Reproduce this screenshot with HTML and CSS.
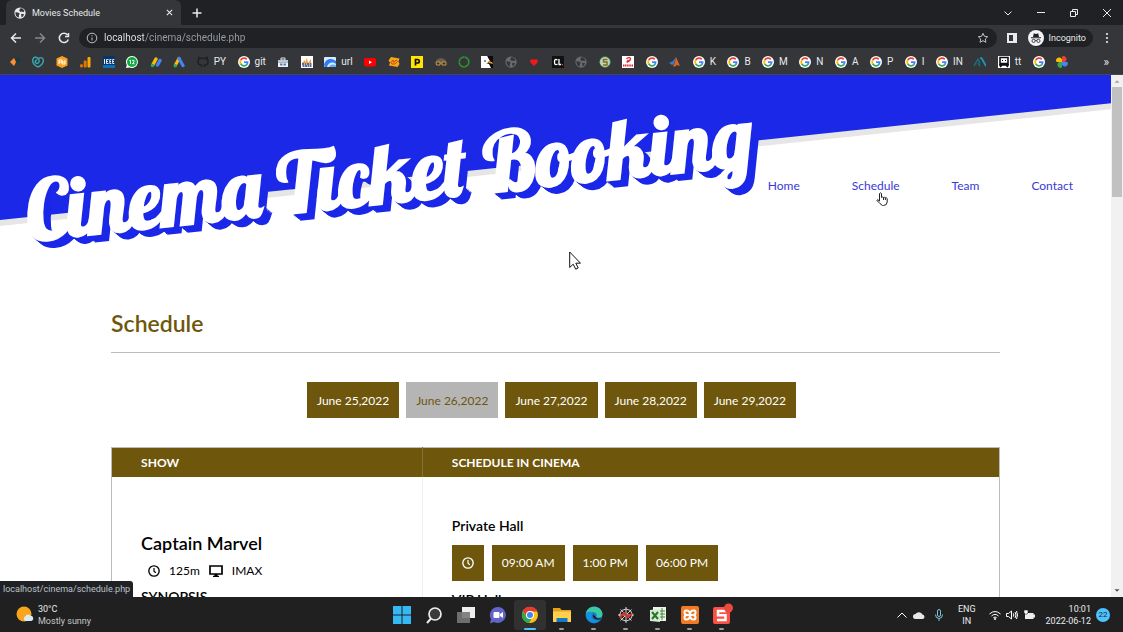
FILE: index.html
```html
<!DOCTYPE html>
<html lang="en">
<head>
    <meta charset="UTF-8">
    <meta name="viewport" content="width=device-width, initial-scale=1.0">
    <title>Movies Schedule</title>
    <link rel="stylesheet" href="styles.css">
</head>
<body>
    <svg class="defs" aria-hidden="true">
        <symbol id="google" viewBox="0 0 48 48">
            <circle cx="24" cy="24" r="24" fill="#fff"/>
            <g fill="none" stroke-width="7">
                <path d="M11 16.500A15 15 0 0 1 35 13.500" stroke="#ea4335"/>
                <path d="M11 32A15 15 0 0 1 11 16" stroke="#fbbc05"/>
                <path d="M35 34.500A15 15 0 0 1 11 31.500" stroke="#34a853"/>
                <path d="M24 24H38.500A15 15 0 0 1 34 35" stroke="#4285f4"/>
            </g>
        </symbol>
        <symbol id="globe" viewBox="0 0 16 16">
            <circle cx="8" cy="8" r="7.500" fill="currentColor"/>
            <path d="M2 6.500c2 .5 3 1 4.500 1l1 1.500-1 2v3C3.500 13.500 1.500 11 2 6.500zM8 2l3-.3 3 3.300-1.500 2-2-1-2 .5L7 4.500zM9.500 9l4 .5-1.500 3-2 1z" class="land"/>
        </symbol>
        <symbol id="clock" viewBox="0 0 16 16">
            <circle cx="8" cy="8" r="6.900" fill="none" stroke="currentColor" stroke-width="1.800"/>
            <path d="M8 4v4.300l2.500 2" fill="none" stroke="currentColor" stroke-width="1.600"/>
        </symbol>
    </svg>

    <div class="tab-strip">
        <div class="tab">
            <svg class="icon tab-icon"><use href="#globe"/></svg>
            <span class="tab-title">Movies Schedule</span>
            <button class="tab-close" aria-label="Close tab"><svg viewBox="0 0 8 8"><path d="M1 1l6 6M7 1L1 7"/></svg></button>
        </div>
        <button class="new-tab" aria-label="New tab"><svg viewBox="0 0 10 10"><path d="M5 0.500v9M0.500 5h9"/></svg></button>
        <div class="window-controls">
            <button aria-label="Search tabs"><svg viewBox="0 0 10 10"><path d="M1.500 3.500L5 7l3.500-3.500"/></svg></button>
            <button aria-label="Minimize"><svg viewBox="0 0 10 10"><path d="M1 4.500h8"/></svg></button>
            <button aria-label="Restore"><svg viewBox="0 0 10 10"><path d="M1.500 3.500h5v5h-5zM3.500 3V1.500h5v5H7"/></svg></button>
            <button aria-label="Close"><svg viewBox="0 0 10 10"><path d="M1 1l8 8M9 1L1 9"/></svg></button>
        </div>
    </div>

    <div class="toolbar">
        <button class="tool" aria-label="Back"><svg viewBox="0 0 12 12"><path d="M11 6H1.500M6 1.500L1.500 6 6 10.500"/></svg></button>
        <button class="tool tool-off" aria-label="Forward"><svg viewBox="0 0 12 12"><path d="M1 6h9.500M6 1.500L10.500 6 6 10.500"/></svg></button>
        <button class="tool" aria-label="Reload"><svg viewBox="0 0 12 12"><path d="M10.300 7.500A4.600 4.600 0 1 1 9.500 3M10.500 1v3.500H7"/></svg></button>
        <div class="omnibox">
            <svg class="info" viewBox="0 0 12 12"><circle cx="6" cy="6" r="4.800"/><path d="M6 5.500v3M6 3.300v1"/></svg>
            <input class="address" type="text" aria-label="Address" value="localhost/cinema/schedule.php">
            <button class="star" aria-label="Bookmark"><svg viewBox="0 0 12 12"><path d="M6 1.300l1.400 3 3.300.4-2.400 2.300.6 3.300L6 8.700l-2.900 1.600.6-3.300L1.300 4.700l3.300-.4z"/></svg></button>
        </div>
        <button class="tool side-panel" aria-label="Side panel"><svg viewBox="0 0 12 12"><path d="M1 1h10v10H1zM3 3v6h4V3z" fill-rule="evenodd"/></svg></button>
        <button class="incognito">
            <svg viewBox="0 0 16 16"><circle cx="8" cy="8" r="8" fill="#f1f3f4"/><path d="M5 7l.8-3.700L8 4l2.200-.7L11 7zM3 7.300h10v.9H3z" fill="#202124"/><path d="M7.200 10.500q.8-.6 1.600 0" fill="none" stroke="#202124" stroke-width=".8"/><circle cx="5.600" cy="10.900" r="1.600" fill="none" stroke="#202124" stroke-width=".8"/><circle cx="10.400" cy="10.900" r="1.600" fill="none" stroke="#202124" stroke-width=".8"/></svg>
            Incognito
        </button>
        <button class="tool menu" aria-label="Menu"><svg viewBox="0 0 12 12"><circle cx="6" cy="2" r="1.100"/><circle cx="6" cy="6" r="1.100"/><circle cx="6" cy="10" r="1.100"/></svg></button>
    </div>

    <div class="bookmarks">
        <div class="bookmark-list">
            <a href="#" aria-label="Diamonds"><svg class="icon" viewBox="0 0 12 12"><path d="M1 6l4-4 2 4-2 4z" fill="#ff8f2b"/><path d="M8 1l4 3-4 4-1-3z" fill="#103c42"/></svg></a>
            <a href="#" aria-label="Hosting"><svg class="icon" viewBox="0 0 12 12"><g fill="none" stroke="#39a7ae" stroke-width="1.400"><path d="M6 11C2 9 0 6 1 3c1-3 5-2 6 1 .8 2-1 4-3 3-1.500-1-.5-3 1-3"/><path d="M6 11c4-2 6-5 5-8-1-2-4-2-5 1"/></g></svg></a>
            <a href="#" aria-label="Hexagon"><svg class="icon" viewBox="0 0 12 12"><path d="M6 0l5.500 2.500v7L6 12 .5 9.500v-7z" fill="#f9a11b"/><path d="M3 8V4h3v4h3V4M3 6h6" fill="none" stroke="#fff"/></svg></a>
            <a href="#" aria-label="Analytics"><svg class="icon" viewBox="0 0 12 12"><rect x="1" y="8" width="3" height="3.500" rx="1.500" fill="#e37400"/><rect x="4.700" y="4.500" width="3" height="7" rx="1" fill="#e37400"/><rect x="8.500" y="1" width="3" height="10.500" rx="1" fill="#f9ab00"/></svg></a>
            <a href="#" aria-label="IEEE"><svg class="icon" viewBox="0 0 12 12"><path d="M0 0h12v12H0z" fill="#06366f"/><path d="M0 9h12v3H0z" fill="#0a72b8"/><path d="M1.500 3v5M5.500 3.500h-2v4h2M3.500 5.500h1.500M8.300 3.500h-1.500v4h1.500M6.800 5.500H8M11.300 3.500H9.700v4h1.600M9.700 5.500H11" fill="none" stroke="#fff" stroke-width=".9"/></svg></a>
            <a href="#" aria-label="Messages"><svg class="icon" viewBox="0 0 12 12"><path d="M6 0a6 6 0 1 1-2.500 11.500L0 12l.8-3A6 6 0 0 1 6 0z" fill="#fff"/><circle cx="6" cy="6" r="5" fill="#11ad43"/><path d="M3.500 5l1-1v4M6.200 4.500H8V6L6.300 7.700h2.200" fill="none" stroke="#fff" stroke-width=".9"/></svg></a>
            <a href="#" aria-label="AdSense"><svg class="icon" viewBox="0 0 12 12"><g stroke-width="3.400" stroke-linecap="round"><path d="M6 3L3 8.500" stroke="#fbbc04"/><path d="M10 4.500L7.500 9" stroke="#4285f4"/></g><circle cx="2.500" cy="9.500" r="1.800" fill="#34a853"/></svg></a>
            <a href="#" aria-label="Ads"><svg class="icon" viewBox="0 0 12 12"><g stroke-width="3.200" stroke-linecap="round"><path d="M6 2.500L2.500 9" stroke="#fbbc04"/><path d="M6 2.500L10 9.500" stroke="#4285f4"/></g><circle cx="2.200" cy="9.700" r="1.700" fill="#34a853"/></svg></a>
            <a href="#"><svg class="icon" viewBox="0 0 12 12"><path d="M4.500 11V9.300C2 9 .8 7.500 1 5.500c0-1 .5-1.700.8-2V1.500l2 1q2.200-.6 4.400 0l2-1v2c.3.300.8 1 .8 2 .2 2-1 3.500-3.500 3.800V11" fill="none" stroke="#202124" stroke-width="1.600"/></svg>PY</a>
            <a href="#"><svg class="icon"><use href="#google"/></svg>git</a>
            <a href="#" aria-label="Store"><svg class="icon" viewBox="0 0 12 12"><path d="M4 2h4v2H4z" fill="none" stroke="#dfe3e8"/><path d="M1 4h10v2.500H1z" fill="#b8c8e0"/><path d="M1 6.500h10V11H1z" fill="#eef2f7"/><path d="M3 7.500h2.500v2H3zM6.500 7.500H9v2H6.500z" fill="#5b7fa8"/></svg></a>
            <a href="#" aria-label="Chart"><svg class="icon" viewBox="0 0 12 12"><path d="M0 0h12v12H0z" fill="#fff"/><path d="M1 7l3-3v3l2-5 1 5 3-4v4z" fill="#f59a21"/><path d="M1 8h10M1.500 10h9" stroke="#263c7a" stroke-width="1.300" stroke-dasharray="2 .5"/></svg></a>
            <a href="#"><svg class="icon" viewBox="0 0 12 12"><rect y="1" width="12" height="10" rx="1" fill="#d9e9ff"/><path d="M0 9C1 3 7 1 12 5v3C8 5 4 7 3 11H1z" fill="#2f7ef2"/><path d="M5 11c1-3 4-3 7-2v2z" fill="#65adff"/></svg>url</a>
            <a href="#" aria-label="YouTube"><svg class="icon" viewBox="0 0 12 12"><rect y="2" width="12" height="8.500" rx="2" fill="#f00"/><path d="M5 4.500v3.500l3-1.700z" fill="#fff"/></svg></a>
            <a href="#" aria-label="Ticket"><svg class="icon" viewBox="0 0 12 12"><path d="M3 1l8.500 1.500-1 3 1 2.500-2 3L1 9.500l1-3-1.500-2z" fill="#f8a51b"/><path d="M3 6.500l2-2.500 1 2.500L8 4l1.500 1.500L7 8H4z" fill="none" stroke="#b8480b" stroke-width=".9"/></svg></a>
            <a href="#" aria-label="P"><svg class="icon" viewBox="0 0 12 12"><path d="M0 0h12v12H0z" fill="#ffe500"/><path d="M4.500 9.500v-6h2a1.500 1.500 0 0 1 0 3.500h-2" fill="none" stroke="#111" stroke-width="1.700"/></svg></a>
            <a href="#" aria-label="Glasses"><svg class="icon" viewBox="0 0 12 12"><path d="M1 6c0-5 10-5 10 0z" fill="#6b6050"/><path d="M1 6h4v3H1.500zM7 6h4v3H7zM5 7h2" fill="#33302c" stroke="#c99845"/></svg></a>
            <a href="#" aria-label="Ring"><svg class="icon" viewBox="0 0 12 12"><circle cx="6" cy="6" r="4.800" fill="none" stroke="#27992f" stroke-width="1.700" stroke-dasharray="7 .5"/></svg></a>
            <a href="#" aria-label="Eagle"><svg class="icon" viewBox="0 0 12 12"><path d="M0 0h12v12H0z" fill="#fff"/><path d="M6 0h6v12h-2L8 8 5 7l3-1z" fill="#0b0b0b"/><path d="M1 0h5l3 5-3 2H1z" fill="#fff"/><path d="M7 5l4 1 1 2-4-1z" fill="#f39c1f"/><circle cx="4" cy="5" r=".8"/></svg></a>
            <a href="#" class="grey-globe" aria-label="Site"><svg class="icon"><use href="#globe"/></svg></a>
            <a href="#" aria-label="Heart"><svg class="icon" viewBox="0 0 12 12"><path d="M6 10L2.500 6.500C1 4 4 2 6 4c2-2 5 0 3.500 2.500z" fill="#f01818"/></svg></a>
            <a href="#" aria-label="CL"><svg class="icon" viewBox="0 0 12 12"><path d="M0 0h12v12H0z" fill="#111"/><path d="M5.500 4C3 2.500 2.500 4 2.500 6s.5 3.500 3 2M7 3v5.500h2" fill="none" stroke="#fff" stroke-width="1.300"/><path d="M9.800 8h1.200v1.200H9.800z" fill="#e43"/></svg></a>
            <a href="#" class="grey-globe" aria-label="Site"><svg class="icon"><use href="#globe"/></svg></a>
            <a href="#" aria-label="S coin"><svg class="icon" viewBox="0 0 12 12"><circle cx="6" cy="6" r="5.300" fill="#bdd7b5" stroke="#3d8b72" stroke-dasharray="2 1"/><path d="M8.500 3.500H4.500v2.500h3.500v3H4" fill="none" stroke="#8a6a20" stroke-width="1.500"/></svg></a>
            <a href="#" aria-label="Airtel"><svg class="icon" viewBox="0 0 12 12"><path d="M0 0h12v12H0z" fill="#fff"/><path d="M4.500 2.800c1.500-2 4.500-1.500 3.800.7-.4 1.500-3 3-3.300 2.500-.4-.7 1-1.300 1.500-2" fill="none" stroke="#e3262e" stroke-width="1.300"/><path d="M1 9.500h10" stroke="#e3262e" stroke-width="2" stroke-dasharray="1.300 .5"/></svg></a>
            <a href="#" aria-label="Google"><svg class="icon"><use href="#google"/></svg></a>
            <a href="#" aria-label="Matlab"><svg class="icon" viewBox="0 0 12 12"><path d="M0 7l4-2 3-4-2 7-2 1z" fill="#2f80c4"/><path d="M7 1l4 9-3-1-3 2-1-2c2 0 2-5 3-8z" fill="#e0602b"/></svg></a>
            <a href="#"><svg class="icon"><use href="#google"/></svg>K</a>
            <a href="#"><svg class="icon"><use href="#google"/></svg>B</a>
            <a href="#"><svg class="icon"><use href="#google"/></svg>M</a>
            <a href="#"><svg class="icon"><use href="#google"/></svg>N</a>
            <a href="#"><svg class="icon"><use href="#google"/></svg>A</a>
            <a href="#"><svg class="icon"><use href="#google"/></svg>P</a>
            <a href="#"><svg class="icon"><use href="#google"/></svg>I</a>
            <a href="#"><svg class="icon"><use href="#google"/></svg>IN</a>
            <a href="#" aria-label="Peaks"><svg class="icon" viewBox="0 0 12 12"><path d="M0 10l4-7 2 4M6 10l-2-3" fill="none" stroke="#1b6f80" stroke-width="1.500"/><path d="M6 2h1.500l4.500 8" fill="none" stroke="#17a0bd" stroke-width="1.700"/></svg></a>
            <a href="#"><svg class="icon" viewBox="0 0 12 12"><path d="M0 0h12v12H0z" fill="#fff"/><path d="M2 1.500h8v6H2zM1 9h10M2 11l2-2M10 11L8 9" fill="none" stroke="#111" stroke-width="1.600"/><path d="M4 4h1v1H4zM7 4h1v1H7z"/></svg>tt</a>
            <a href="#" aria-label="Google"><svg class="icon"><use href="#google"/></svg></a>
            <a href="#" aria-label="Photos"><svg class="icon" viewBox="0 0 12 12"><path d="M6 .5V6h2.800A2.800 2.800 0 0 0 6 .5z" fill="#ea4335"/><path d="M11.500 6H6v2.800A2.800 2.800 0 0 0 11.500 6z" fill="#4285f4"/><path d="M6 11.500V6H3.200A2.800 2.800 0 0 0 6 11.500z" fill="#34a853"/><path d="M.5 6H6V3.200A2.800 2.800 0 0 0 .5 6z" fill="#fbbc04"/></svg></a>
        </div>
        <button class="more" aria-label="More bookmarks">»</button>
    </div>

    <div class="viewport">
        <div class="page">
            <header class="header">
                <h1 class="logo">Cinema Ticket Booking</h1>
                <nav class="nav">
                    <a href="#">Home</a>
                    <a href="#">Schedule</a>
                    <a href="#">Team</a>
                    <a href="#">Contact</a>
                </nav>
            </header>

            <main class="section">
                <h2 class="section-title">Schedule</h2>
                <div class="dates">
                    <button class="btn">June 25,2022</button>
                    <button class="btn btn-active">June 26,2022</button>
                    <button class="btn">June 27,2022</button>
                    <button class="btn">June 28,2022</button>
                    <button class="btn">June 29,2022</button>
                </div>
                <table class="schedule">
                    <thead>
                        <tr>
                            <th class="col-show">SHOW</th>
                            <th>SCHEDULE IN CINEMA</th>
                        </tr>
                    </thead>
                    <tbody>
                        <tr>
                            <td class="movie">
                                <h3 class="movie-title">Captain Marvel</h3>
                                <div class="movie-info">
                                    <svg class="icon"><use href="#clock"/></svg>
                                    <span>125m</span>
                                    <svg class="screen" viewBox="0 0 14 12"><path d="M1 1h12v8H1z" fill="none" stroke="currentColor" stroke-width="1.700"/><path d="M5.500 9h3v1.800H10V12H4v-1.200h1.500z"/></svg>
                                    <span>IMAX</span>
                                </div>
                                <h4 class="synopsis">SYNOPSIS</h4>
                            </td>
                            <td class="halls">
                                <h4 class="hall-name">Private Hall</h4>
                                <div class="times">
                                    <button class="btn" aria-label="Times"><svg class="icon"><use href="#clock"/></svg></button>
                                    <button class="btn">09:00 AM</button>
                                    <button class="btn">1:00 PM</button>
                                    <button class="btn">06:00 PM</button>
                                </div>
                                <h4 class="hall-name">VIP Hall</h4>
                            </td>
                        </tr>
                    </tbody>
                </table>
            </main>
        </div>
        <div class="scrollbar">
            <svg viewBox="0 0 12 12"><path d="M3 8l3-3 3 3z" fill="#a3a3a3"/></svg>
            <div class="thumb"></div>
            <svg class="down" viewBox="0 0 12 12"><path d="M3 4l3 3 3-3z" fill="#505050"/></svg>
        </div>
        <div class="status">localhost/cinema/schedule.php</div>
        <svg class="pointer arrow" viewBox="0 0 12 19"><path d="M.7 1v15.500l3.500-3.300 2.500 5 2.500-1.200-2.400-4.800h4.700z" fill="#fff" stroke="#111"/></svg>
        <svg class="pointer hand" viewBox="0 0 12 14"><path d="M3.500 9V1.500q1-1.300 2 0v4q1-1 2 0 1-.7 1.900.3 1.100-.4 1.800.7V10q-.2 3.500-3.700 3.500H6.500Q4 12 .8 8.300q.5-1.500 2.700.7zM7.500 5.500V8M9.400 5.800V8" fill="#fff" stroke="#222"/></svg>
    </div>

    <footer class="taskbar">
        <div class="weather">
            <svg viewBox="0 0 18 18"><circle cx="8" cy="8" r="7.500" fill="#fba51a"/><path d="M9 15a3 3 0 0 1 .5-5 3 3 0 0 1 5-.3 2.700 2.700 0 0 1 .8 5.300z" fill="#dceaf8"/></svg>
            <div>30°C<br><span class="muted">Mostly sunny</span></div>
        </div>
        <div class="apps">
            <button aria-label="Start"><svg viewBox="0 0 18 18"><path d="M0 0h8.500v8.500H0zM9.500 0H18v8.500H9.500zM0 9.500h8.500V18H0zM9.500 9.500H18V18H9.500z" fill="#36b8f5"/></svg></button>
            <button aria-label="Search"><svg viewBox="0 0 18 18"><circle cx="10" cy="8" r="6" fill="#3b3b3b" stroke="#ededed" stroke-width="1.700"/><path d="M6 12.500L2 17" stroke="#ededed" stroke-width="2"/></svg></button>
            <button aria-label="Task view"><svg viewBox="0 0 18 18"><path d="M5 1h13v11H5z" fill="#eee"/><path d="M0 6h13v11H0z" fill="#777" opacity=".9"/></svg></button>
            <button aria-label="Chat"><svg viewBox="0 0 18 18"><path d="M9 1a8 8 0 1 1-4 15l-4 1.500L2 13A8 8 0 0 1 9 1z" fill="#6264c7"/><rect x="4.500" y="6" width="6" height="6" rx="1" fill="#fff"/><path d="M11 8l3-2v6l-3-2z" fill="#fff"/></svg></button>
            <button class="running current" aria-label="Chrome"><svg viewBox="0 0 18 18"><circle cx="9" cy="9" r="8" fill="#fbc116"/><path d="M2 5a8 8 0 0 1 14.300 0.500H9A3.700 3.700 0 0 0 5.800 11z" fill="#e33b2e"/><path d="M2 5l3.800 6.200A3.700 3.700 0 0 0 11 12l-3 5A8 8 0 0 1 2 5z" fill="#2da94f"/><circle cx="9" cy="9" r="4" fill="#fff"/><circle cx="9" cy="9" r="3" fill="#4285f4"/></svg></button>
            <button class="running" aria-label="Files"><svg viewBox="0 0 18 18"><path d="M0 2h7l1.500 2H18v4H0z" fill="#e5a11a"/><path d="M0 5.500h18V16H0z" fill="#ffd04b"/><path d="M3.500 16v-4h11v4z" fill="#1878c8"/></svg></button>
            <button class="running" aria-label="Edge"><svg viewBox="0 0 18 18"><circle cx="9" cy="9" r="8.500" fill="#1679c9"/><path d="M1 7C3-2 17-1 17.500 8c0 4-5 4.500-6.500 3 2-2 0-5-4-5-3 0-5 1-6 1z" fill="#3bc9a4"/><path d="M1 7c6-3 8 0 6 2-2 3 2 7 8 5-5 5-14 3-14-7z" fill="#1592df"/><path d="M8 8.500c-1 3 2 5.500 7 5l1.500-1.700C14 13 11 12.500 11 11z" fill="#202021"/></svg></button>
            <button class="running" aria-label="Spyder"><svg viewBox="0 0 18 18"><g fill="none" stroke="#e5e5e5" stroke-width=".9"><path d="M9 1v16M1 9h16M3.500 3.500l11 11M14.500 3.500l-11 11"/><path d="M9 3l4.500 1.500L15.500 9l-2 4.500L9 15l-4.500-1.500L2.500 9l2-4.500z"/></g><path d="M3 12l4-5 4 4 4-3" fill="none" stroke="#e12a20" stroke-width="2"/></svg></button>
            <button class="running" aria-label="Excel"><svg viewBox="0 0 18 18"><path d="M4 1h13v14H4z" fill="#eaf4e5"/><path d="M10 5h6M10 8h6M10 11h6M13 2v12" stroke="#438742"/><path d="M1 4l10-1v13L1 15z" fill="#d8ebd2"/><path d="M3 6l6 7M9 6l-6 7" stroke="#26762b" stroke-width="2"/></svg></button>
            <button class="running" aria-label="XAMPP"><svg viewBox="0 0 18 18"><rect width="18" height="18" rx="2" fill="#f37a25"/><path d="M6 4.500H5q-1.500 0-1.500 2T5.500 9h7q2 0 2-2.500T13 4.500h-1Q9 5 9 9t-3 4.500H5q-1.500 0-1.500-2T5.500 9M12.500 9q2 .5 2 2.500t-1.500 2h-1Q9 13 9 9T6 4.500" fill="none" stroke="#fff" stroke-width="2"/></svg></button>
            <button class="running" aria-label="Recorder"><svg viewBox="0 0 18 18"><rect y="1" width="17" height="17" rx="2" fill="#fc5043"/><path d="M13 5H5v4.300h7.500V14H4" fill="none" stroke="#fff" stroke-width="2.500"/><circle cx="15.500" cy="2" r="4.500" fill="#e94b3c"/></svg></button>
        </div>
        <div class="tray">
            <svg class="icon" viewBox="0 0 12 12"><path d="M1.500 8.500L6 4l4.500 4.500" fill="none" stroke="#fff"/></svg>
            <svg class="icon" viewBox="0 0 12 12"><path d="M2.500 10a2.500 2.500 0 0 1 0-5 4 4 0 0 1 7 .5 2.300 2.300 0 0 1 .3 4.500z" fill="#e8e8e8"/></svg>
            <svg class="icon mic" viewBox="0 0 12 12"><g fill="none" stroke="#79c4d4"><rect x="4.500" y=".5" width="3" height="7" rx="1.500"/><path d="M2.500 5.500q0 4 3.500 4t3.500-4M6 9.500V12"/></g></svg>
            <div class="lang">ENG<br>IN</div>
            <svg class="icon" viewBox="0 0 12 12"><g fill="none" stroke="#fff"><path d="M.5 5q5.500-5 11 0M2.500 7q3.500-3.300 7 0M4.300 8.800q1.700-1.600 3.400 0"/></g><circle cx="6" cy="10" r="1" fill="#fff"/></svg>
            <svg class="icon" viewBox="0 0 12 12"><path d="M.5 4.500h2l3-2.500v8L2.500 7.500h-2zM7.300 4.300q1 1.700 0 3.400M9 3q2 3 0 6M10.500 2q2 4 0 8" fill="none" stroke="#fff"/></svg>
            <svg class="icon" viewBox="0 0 12 12"><path d="M2 4h8.500v1.500H12v3h-1.500V10H2z" fill="#eee"/><path d="M1 1h4v3L3 5.500 1 4z" fill="#fff" stroke="#202021" stroke-width=".6"/></svg>
            <div class="date-time">10:01<br>2022-06-12</div>
            <span class="badge">22</span>
        </div>
    </footer>
</body>
</html>
```

FILE: styles.css
```css
* {
    box-sizing: border-box;
}
body {
    margin: 0;
    height: 100vh;
    display: flex;
    flex-direction: column;
    overflow: hidden;
    background: #fff;
    font-family: Lato, sans-serif;
    font-size: 12px;
    color: #000;
}
button {
    border: none;
    background: none;
    padding: 0;
    font: inherit;
    color: inherit;
    cursor: pointer;
}
a {
    text-decoration: none;
    color: inherit;
}
h1, h2, h3, h4 {
    margin: 0;
}
svg {
    display: block;
    flex: none;
}
.defs {
    position: absolute;
    width: 0;
    height: 0;
}
.icon {
    width: 12px;
    height: 12px;
}
.land {
    fill: #35363a;
}

/* browser window */
.tab-strip, .toolbar, .bookmarks, .status, .taskbar {
    font-family: Roboto, "Open Sans", sans-serif;
    color: #e8eaed;
}
.tab-strip {
    flex: none;
    display: flex;
    align-items: center;
    height: 25px;
    padding-left: 6px;
    background: #202124;
}
.tab {
    display: flex;
    align-items: center;
    gap: 6px;
    width: 175px;
    height: 25px;
    padding: 0 8px;
    border-radius: 6px 6px 0 0;
    background: #35363a;
    font-size: 9px;
}
.tab-title {
    flex: 1;
}
.tab-close svg {
    width: 7px;
    height: 7px;
}
.new-tab {
    margin-left: 11px;
}
.new-tab svg {
    width: 10px;
    height: 10px;
}
.tab-strip path {
    fill: none;
    stroke: #e8eaed;
    stroke-width: 1.2;
}
.new-tab path {
    stroke-width: 1.5;
}
.window-controls {
    display: flex;
    margin-left: auto;
}
.window-controls button {
    display: grid;
    place-items: center;
    width: 33px;
    height: 22px;
}
.window-controls svg {
    width: 10px;
    height: 10px;
}
.window-controls path {
    stroke-width: 1;
}
.toolbar {
    flex: none;
    display: flex;
    align-items: center;
    height: 26px;
    padding: 0 4px;
    background: #35363a;
}
.tool {
    display: grid;
    place-items: center;
    width: 24px;
}
.tool svg {
    width: 12px;
    height: 12px;
    fill: none;
    stroke: #e8eaed;
    stroke-width: 1.5;
}
.tool-off {
    opacity: 0.45;
}
.side-panel {
    margin-left: 3px;
}
.side-panel svg, .menu svg {
    fill: #e8eaed;
    stroke: none;
}
.omnibox {
    flex: 1;
    display: flex;
    align-items: center;
    gap: 6px;
    height: 20px;
    margin-left: 3px;
    padding: 0 8px 0 7px;
    border-radius: 10px;
    background: #202124;
}
.info, .star svg {
    width: 12px;
    height: 12px;
    fill: none;
    stroke: #bdc1c6;
}
.address {
    flex: 1;
    padding: 0;
    border: none;
    font: 10px/16px Roboto, "Open Sans", sans-serif;
    color: transparent;
    background: linear-gradient(to right, #e8eaed 40px, #9aa0a6 40px);
    -webkit-background-clip: text;
    background-clip: text;
}
.incognito {
    display: flex;
    align-items: center;
    gap: 5px;
    height: 18px;
    margin-left: 4px;
    padding-right: 7px;
    border-radius: 9px;
    background: #202124;
    font-size: 9px;
}
.incognito svg {
    width: 16px;
    height: 16px;
}
.menu {
    margin-left: 2px;
}
.bookmarks {
    flex: none;
    display: flex;
    align-items: center;
    gap: 35px;
    height: 24px;
    padding: 0 14px 2px 9px;
    background: #35363a;
    border-bottom: 1px solid #45464a;
    font-size: 10px;
}
.bookmark-list {
    flex: 1;
    display: flex;
    align-items: center;
    justify-content: space-between;
}
.bookmark-list a {
    display: flex;
    align-items: center;
    gap: 5px;
}
.grey-globe {
    color: #686b70;
}
.more {
    font-size: 12px;
    line-height: 12px;
}

/* web page */
.viewport {
    position: relative;
    flex: 1;
    display: flex;
    min-height: 0;
}
.page {
    flex: 1;
    overflow: hidden;
}
.header {
    position: relative;
    display: flex;
    align-items: center;
    justify-content: space-between;
    height: 220px;
    padding: 0 38px 0 24px;
}
.header::before {
    content: "";
    position: absolute;
    top: -200px;
    left: 0;
    width: 100%;
    height: 345px;
    background: #1b28e8;
    box-shadow: 0 6px #e6e6e6;
    transform: skewY(-6deg);
    transform-origin: top left;
}
.logo {
    position: relative;
    margin-bottom: 24px;
    font: bold 82px/100px Lobster, "Liberation Serif", serif;
    white-space: nowrap;
    color: #fff;
    text-shadow: 1px 1px #1b28e8, 2px 2px #1b28e8, 3px 3px #1b28e8, 4px 4px #1b28e8, 5px 5px #1b28e8, 6px 6px #1b28e8, 7px 7px #1b28e8;
    transform: rotate(-6deg);
}
.nav {
    position: relative;
    display: flex;
    gap: 52px;
    color: #3a38d8;
}
.section {
    width: 80%;
    margin: 0 auto;
}
.section-title {
    padding: 12px 0;
    border-bottom: 1px solid #bbb;
    font-size: 23px;
    line-height: 33px;
    font-weight: 600;
    color: #6e570c;
}
.dates {
    display: flex;
    justify-content: center;
    gap: 7px;
    margin: 29px 0;
    padding-right: 8px;
}
.btn {
    height: 36px;
    padding: 0 10px;
    background: #6e570c;
    color: #fff;
}
.btn-active {
    background: #b5b5b5;
    color: #6e570c;
}
.schedule {
    width: 100%;
    border-collapse: collapse;
    border: 1px solid #bbb;
}
.schedule th, .schedule td {
    padding: 0 29px;
    text-align: left;
    vertical-align: top;
}
.schedule th {
    height: 29px;
    background: #6e570c;
    color: #fff;
    vertical-align: middle;
}
.schedule th + th {
    border-left: 1px solid #85713a;
}
.schedule td + td {
    border-left: 1px solid #eee;
}
.col-show {
    width: 35%;
}
.schedule .movie {
    padding-top: 54px;
}
.movie-title {
    font-size: 18px;
    line-height: 24px;
    font-weight: 600;
}
.movie-info {
    display: flex;
    align-items: center;
    gap: 9px;
    padding: 6px 7px;
    line-height: 20px;
}
.screen {
    width: 14px;
    height: 12px;
}
.synopsis, .hall-name {
    font-size: 14px;
    line-height: 20px;
    font-weight: 600;
}
.schedule .halls {
    padding-top: 39px;
}
.times {
    display: flex;
    gap: 8px;
    margin: 9px 0;
}
.scrollbar {
    flex: none;
    display: flex;
    flex-direction: column;
    width: 12px;
    padding: 0 1px;
    background: #f1f1f1;
}
.scrollbar svg {
    width: 10px;
    height: 12px;
}
.thumb {
    height: 21%;
    background: #c1c1c1;
}
.scrollbar .down {
    margin-top: auto;
}
.status {
    position: absolute;
    left: 0;
    bottom: 0;
    height: 16px;
    padding: 0 3px;
    border-radius: 0 3px 0 0;
    background: #202124;
    font-size: 9px;
    line-height: 16px;
    color: #bdc1c6;
}
.pointer {
    position: absolute;
}
.arrow {
    left: 569px;
    top: 176px;
    width: 12px;
    height: 19px;
}
.hand {
    left: 876px;
    top: 117px;
    width: 12px;
    height: 14px;
}

/* taskbar */
.taskbar {
    flex: none;
    display: grid;
    grid-template-columns: 1fr auto 1fr;
    align-items: center;
    height: 35px;
    background: #202021;
    font-size: 9px;
    line-height: 12px;
}
.weather {
    display: flex;
    align-items: center;
    gap: 4px;
    padding-left: 16px;
}
.weather svg {
    width: 18px;
    height: 18px;
}
.muted {
    color: #c8c8c8;
}
.apps {
    display: flex;
}
.apps button {
    position: relative;
    display: grid;
    place-items: center;
    width: 32px;
    height: 30px;
    border-radius: 3px;
}
.apps svg {
    width: 18px;
    height: 18px;
    overflow: visible;
}
.apps .current {
    background: #313132;
}
.running::after {
    content: "";
    position: absolute;
    bottom: 0;
    width: 5px;
    height: 2px;
    border-radius: 1px;
    background: #9a9a9a;
}
.current::after {
    width: 12px;
    background: #4cc2ff;
}
.tray {
    display: flex;
    align-items: center;
    justify-content: flex-end;
    gap: 5px;
    padding-right: 13px;
}
.mic {
    margin-left: 3px;
}
.lang {
    margin: 0 8px;
    text-align: center;
}
.date-time {
    margin-left: 6px;
    text-align: right;
}
.badge {
    width: 14px;
    height: 14px;
    border-radius: 50%;
    background: #4cc2ff;
    color: #1b2b36;
    font-size: 8px;
    line-height: 14px;
    text-align: center;
}
```
